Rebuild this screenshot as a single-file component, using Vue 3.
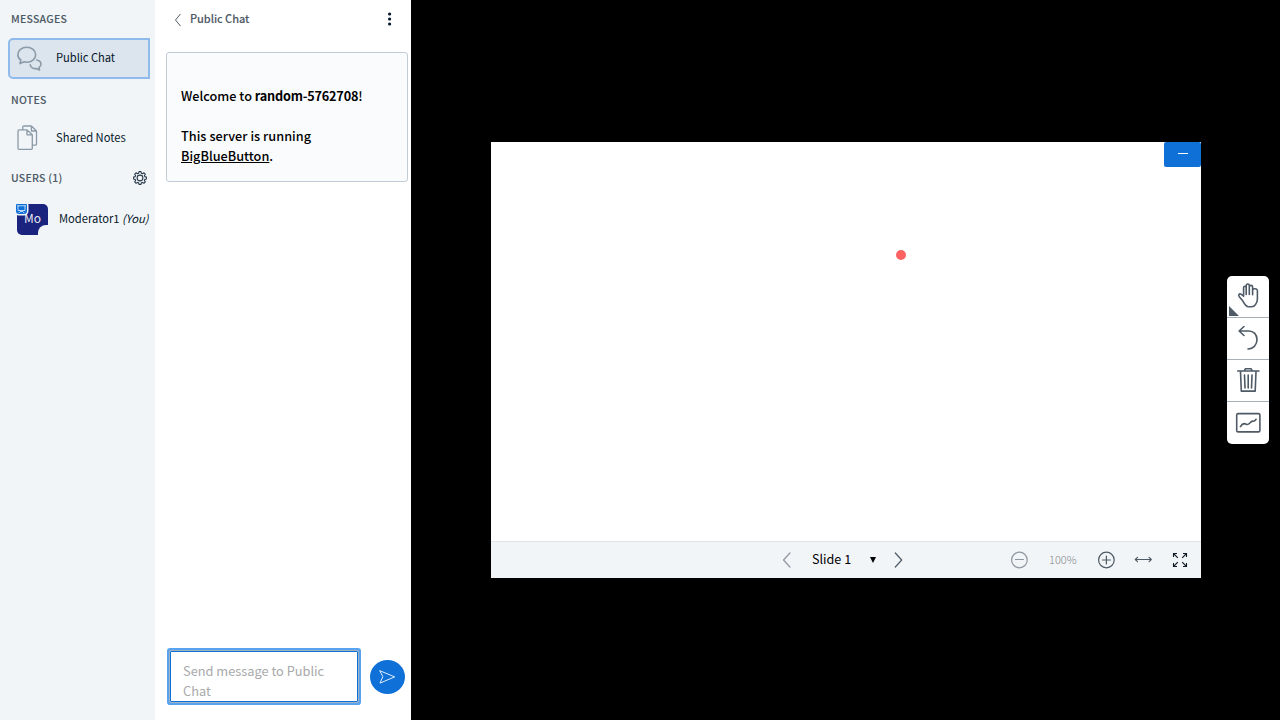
<script setup>
const messageLabel = 'Send message to Public Chat'
</script>

<template>
  <div class="app">
    <aside class="sidebar">
      <h2 class="heading h-messages">MESSAGES</h2>
      <div class="item active">
        <svg class="item-icon" width="26" height="26" viewBox="0 0 26 26">
          <path d="M3.8 14C2 12.8 .8 11 .8 8.8C.8 4.5 4.8 1.3 9.7 1.3S18.7 4.5 18.7 8.8S14.6 16.2 9.7 16.2C8.8 16.2 7.9 16.1 7.1 15.8L3 17.6Z" />
          <path d="M19.8 14C22.2 14.6 24 16.1 24 18.2C24 19.6 23.1 20.7 22 21.4L22.5 23.9L19 22.6C16.3 22.8 13.7 21.4 13.3 18.8" />
        </svg>
        <span>Public Chat</span>
      </div>
      <h2 class="heading h-notes">NOTES</h2>
      <div class="item notes">
        <svg class="item-icon" width="26" height="26" viewBox="0 0 26 26">
          <path d="M5.8 4.5V2.2Q5.8 1 7 1H14.4L19.5 6V19Q19.5 20.2 18.3 20.2H15.5M14.4 1V6H19.5" />
          <path d="M1 6Q1 4.9 2.1 4.9H10L15.3 9.8V23.2Q15.3 24.4 14.1 24.4H2.2Q1 24.4 1 23.2ZM10 4.9V9.8H15.3" />
        </svg>
        <span>Shared Notes</span>
      </div>
      <div class="users-row">
        <h2 class="heading h-users">USERS (1)</h2>
        <svg width="14" height="14" viewBox="0 0 14 14" class="gear">
          <path d="M6 .6H8L8.4 2.3L9.4 2.7L10.9 1.8L12.3 3.2L11.4 4.6L11.8 5.6L13.4 6V8L11.8 8.4L11.4 9.4L12.3 10.9L10.9 12.3L9.4 11.4L8.4 11.8L8 13.4H6L5.6 11.8L4.6 11.4L3.1 12.3L1.7 10.9L2.6 9.4L2.2 8.4L.6 8V6L2.2 5.6L2.6 4.6L1.7 3.2L3.1 1.8L4.6 2.7L5.6 2.3Z" />
          <circle cx="7" cy="7" r="2.9" />
        </svg>
      </div>
      <div class="user">
        <div class="avatar">
          <span>Mo</span>
          <i class="presence"></i>
          <div class="presenter">
            <svg width="9" height="9" viewBox="0 0 9 9"><path d="M.2 .8H8.8M1 .8V5.5H8V.8M2 7.8L3.2 6.5H5.8L7 7.8" /></svg>
          </div>
        </div>
        <span class="user-name">Moderator1 <em>(You)</em></span>
      </div>
    </aside>

    <section class="chat">
      <header class="chat-header">
        <svg class="back" width="8" height="14" viewBox="0 0 8 14"><path d="M6.2 1.3L1.5 7L6.2 12.7" /></svg>
        <span>Public Chat</span>
        <svg class="dots" width="4" height="14" viewBox="0 0 4 14"><circle cx="1.6" cy="2" r="1.6" /><circle cx="1.6" cy="7" r="1.6" /><circle cx="1.6" cy="12" r="1.6" /></svg>
      </header>
      <div class="welcome">
        <p class="w-first">Welcome to <b>random-5762708</b>!</p>
        <p class="w-second">This server is running</p>
        <p class="w-third"><u>BigBlueButton</u>.</p>
      </div>
      <footer class="composer">
        <div class="input"><span>{{ messageLabel }}</span></div>
        <button class="send" aria-label="Send">
          <svg width="17" height="14" viewBox="0 0 17 14"><path d="M1 .8L15.7 6.9L1 13.1L3.7 6.9Z" /></svg>
        </button>
      </footer>
    </section>

    <main class="stage">
      <div class="presentation">
        <div class="slide">
          <div class="minimize"><i></i></div>
          <i class="cursor"></i>
        </div>
        <div class="controls">
          <svg class="prev" width="9" height="16" viewBox="0 0 9 16"><path d="M7.9 1L1.5 8L7.9 15" /></svg>
          <span class="slide-name">Slide 1</span>
          <svg class="caret" width="6" height="6" viewBox="0 0 6 6"><path d="M0 0H6L3 6Z" /></svg>
          <svg class="next" width="9" height="16" viewBox="0 0 9 16"><path d="M1.3 1L7.7 8L1.3 15" /></svg>
          <svg class="minus" width="18" height="18" viewBox="0 0 18 18"><circle cx="9.4" cy="9" r="7.8" /><path d="M5.4 8.5H13.4" /></svg>
          <span class="zoom">100%</span>
          <svg class="plus" width="18" height="18" viewBox="0 0 18 18"><circle cx="9.4" cy="9" r="7.8" /><path d="M5.4 9H13.4M9.4 5V13" /></svg>
          <svg class="fit" width="18" height="8" viewBox="0 0 18 8"><path d="M1.3 3.5H17.3M3.5 1.4L1.3 3.5L3.5 5.6M15.1 1.4L17.3 3.5L15.1 5.6" /></svg>
          <svg class="full" width="16" height="16" viewBox="0 0 16 16"><path d="M1.5 5V1.5H5M1.5 1.5L5.8 5.8M11 1.5H14.5V5M14.5 1.5L10.2 5.8M1.5 11V14.5H5M1.5 14.5L5.8 10.2M11 14.5H14.5V11M14.5 14.5L10.2 10.2" /></svg>
        </div>
      </div>
      <div class="tools">
        <div class="tool">
          <svg width="42" height="41" viewBox="0 0 42 41">
            <path d="M15.5 24.5L12.3 20.8C10.8 18.8 12.5 17.2 14.3 18.4L16.6 20.2V11.6C16.7 9.7 19 9.7 19.2 11.6V18.5V9.5C19.3 7.4 22.2 7.4 22.3 9.5V18.5V10.8C22.5 8.9 25.5 8.9 25.6 10.8V18.8V14.1C26 12.2 29.8 12.3 30.4 14.4V23C30.4 26 29.5 27.3 28.5 28.6C27.5 30.2 26.5 30.8 24.5 30.8H21.3C18.8 30.8 17.5 28.2 15.5 24.5Z" />
            <path class="corner" d="M2 30L12 40H2Z" />
          </svg>
        </div>
        <div class="tool">
          <svg width="42" height="41" viewBox="0 0 42 41"><path d="M17 8.5L12.1 13L17 17.5M12.1 13H21.7C26.7 13 30 16.6 30 21.6C30 26.8 26.4 31 21 31" /></svg>
        </div>
        <div class="tool">
          <svg width="42" height="41" viewBox="0 0 42 41"><path d="M10.7 11H32M17.4 10.5L18.3 8.8H24.2L25 10.5M13.5 11.5L14.3 31.1H28.2L29 11.5M17.5 15L18 28M21.2 15V28M25 15L24.5 28" /></svg>
        </div>
        <div class="tool">
          <svg width="42" height="42" viewBox="0 0 42 42"><rect x="9.7" y="11.6" width="23.2" height="18.3" rx="1.5" /><path d="M13.4 24.6C15.3 21.5 17 21 19.2 22.2C22.3 24.1 23 18.5 26.2 19.2C27.5 19.4 28.2 18.5 29.1 17.3" /></svg>
        </div>
      </div>
    </main>
  </div>
</template>

<style>
body { margin: 0; background: #000; }
</style>

<style scoped>
* { box-sizing: border-box; }
.app { display: flex; width: 1280px; height: 720px; overflow: hidden; font-family: "Noto Sans CJK SC", "Noto Sans", sans-serif; color: #06172a; }
svg { display: block; flex: none; fill: none; stroke: #4e5a66; stroke-linecap: round; stroke-linejoin: round; }
span, p, h2 { white-space: nowrap; }
.sidebar { width: 155px; height: 720px; background: #f1f5f8; overflow: hidden; }
.heading { margin: 0; padding-left: 11px; font-size: 10.5px; line-height: 18px; font-weight: 500; letter-spacing: .25px; color: #4e5a66; -webkit-text-stroke: .1px #4e5a66; }
.h-messages { padding-top: 10px; }
.item { display: flex; align-items: center; height: 41px; margin-left: 8px; width: 142px; font-size: 11.2px; line-height: 18px; }
.item span { padding-bottom: 2px; }
.item-icon { margin-right: 13px; stroke: #8b9aa8; stroke-width: 1.3; }
.active { margin-top: 10px; padding-left: 7px; border: 2px solid #8ebbec; border-radius: 5px 0 0 5px; background: #dce4ed; }
.active .item-icon { stroke-width: 1.6; }
.active span { letter-spacing: -.05px; padding-bottom: 3px; }
.h-notes { padding-top: 12px; }
.notes { margin-top: 8px; padding-left: 9px; }
.users-row { display: flex; align-items: center; margin-top: 10px; height: 20px; justify-content: space-between; padding-right: 8px; }
.gear { stroke: #2a3a4a; stroke-width: 1.1; }
.user { display: flex; align-items: center; margin-top: 16px; padding-left: 17px; height: 31px; }
.avatar { position: relative; width: 31px; height: 31px; background: #1a237e; border-radius: 5px; color: #e8e9f2; font-size: 12px; line-height: 27px; text-align: center; }
.presence { position: absolute; right: -1px; bottom: -1px; width: 11px; height: 11px; background: #f1f5f8; border-radius: 8px 0 0 0; }
.presenter { position: absolute; left: -1px; top: 0; width: 11px; height: 10px; background: #0f70d7; box-shadow: 0 0 0 1.5px #f1f5f8; border-radius: 1px 1px 3px 3px; padding: 1px; }
.presenter svg { stroke: #cfe3f8; stroke-width: .9; }
.user-name { margin-left: 11px; padding-bottom: 4px; font-size: 11.2px; line-height: 18px; }
.chat { display: flex; flex-direction: column; width: 256px; height: 720px; background: #fff; }
.chat-header { display: flex; align-items: center; height: 38px; padding: 0 19px; font-size: 11px; font-weight: 500; color: #4e5a66; -webkit-text-stroke: .1px #4e5a66; }
.chat-header span { padding-bottom: 3px; letter-spacing: -.05px; }
.back { margin-top: 2px; margin-right: 8px; }
.dots { margin-left: auto; fill: #06172a; stroke: none; }
.welcome { margin: 14px 3px 0 11px; height: 130px; padding: 33px 14px 0; border: 1px solid #c1ccd6; border-radius: 3px; background: #fafbfd; color: #000; font-size: 12.7px; line-height: 20px; font-weight: 500; }
.welcome p { margin: 0; }
.welcome b { letter-spacing: -.2px; }
.welcome .w-second { margin-top: 20px; letter-spacing: .03px; }
.welcome u { text-underline-offset: 1px; }
.composer { display: flex; align-items: center; margin-top: auto; padding-left: 15px; height: 87px; }
.input { width: 188px; height: 51px; overflow: hidden; border: 1px solid #0f70d7; box-shadow: 0 0 0 1px #a3b2c1, 0 0 0 3px #57a3f0; border-radius: 1px; padding: 9px 12px 0; font-size: 12.8px; line-height: 20px; color: #a7a9ab; }
.input span { display: block; width: 155px; white-space: normal; }
.send { display: flex; align-items: center; justify-content: center; width: 35px; height: 34px; margin-left: 12px; padding: 0; border: 0; border-radius: 50%; background: #0f70d7; }
.send svg { stroke: #e0edfa; stroke-width: 1; }
.stage { flex: 1; display: flex; align-items: center; padding-left: 80px; background: #000; }
.presentation { width: 710px; height: 436px; background: #fff; }
.slide { position: relative; height: 399px; }
.minimize { position: absolute; right: 0; top: 0; width: 37px; height: 25px; background: #0f70d7; border-radius: 2px; }
.minimize i { position: absolute; left: 14px; top: 11px; width: 10px; height: 1px; background: #fff; }
.cursor { position: absolute; left: 405px; top: 108px; width: 10px; height: 10px; border-radius: 50%; background: #ff6262; }
.controls { display: flex; align-items: center; height: 37px; border-top: 1px solid #dfe5eb; background: #f1f5f8; padding-left: 291px; }
.prev, .next { stroke-width: 1.2; }
.prev { opacity: .6; }
.slide-name { margin-left: 21px; width: 58px; padding-bottom: 2px; font-size: 12.6px; line-height: 20px; color: #000; }
.caret { margin-left: 0; fill: #000; stroke: none; }
.next { margin-left: 18px; }
.minus { margin-left: 107px; opacity: .6; stroke-width: 1.2; }
.zoom { width: 28px; margin-left: 21px; padding-bottom: 3px; font-size: 11px; font-weight: 300; line-height: 18px; color: #858789; }
.plus { margin-left: 20px; stroke-width: 1.2; }
.fit { margin-left: 19px; stroke-width: 1.2; }
.full { margin-left: 20px; stroke: #111b26; stroke-width: 1.1; stroke-linecap: butt; stroke-linejoin: miter; }
.tools { margin-left: 26px; width: 42px; height: 168px; background: #fff; border-radius: 5px; overflow: hidden; }
.tool { height: 42px; border-bottom: 1px solid #a7b0b8; }
.tool:last-child { border-bottom: 0; }
.tool svg { stroke-width: 1.6; }
.tool .corner { fill: #4e5a66; stroke: none; }
</style>
